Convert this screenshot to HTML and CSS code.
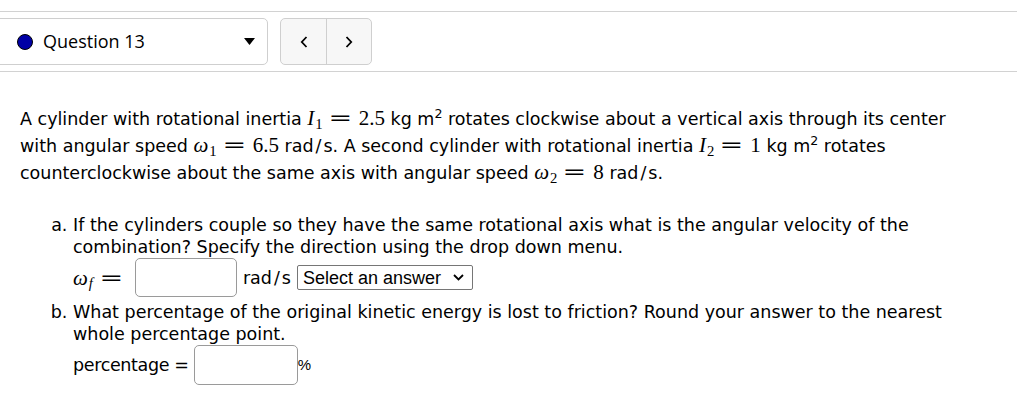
FILE: index.html
```html
<!DOCTYPE html>
<html lang="en">
<head>
<meta charset="utf-8">
<title>Question 13</title>
<link rel="stylesheet" href="styles.css">
</head>
<body>
<header class="qbar">
  <div class="qselect">
    <span class="dot"></span>
    <span class="qlabel">Question 13</span>
    <svg class="caret" width="11" height="7" viewBox="0 0 11 7"><path d="M0 0 H11 L5.5 7 Z" fill="#000"/></svg>
  </div>
  <div class="navgroup">
    <button class="navbtn" type="button" aria-label="Previous">
      <svg width="8" height="12" viewBox="0 0 8 12"><path d="M6.5 1 L1.8 6 L6.5 11" fill="none" stroke="#000" stroke-width="1.8"/></svg>
    </button>
    <button class="navbtn" type="button" aria-label="Next">
      <svg width="8" height="12" viewBox="0 0 8 12"><path d="M1.5 1 L6.2 6 L1.5 11" fill="none" stroke="#000" stroke-width="1.8"/></svg>
    </button>
  </div>
</header>
<main class="question">
  <p class="stem">A cylinder with rotational inertia <span class="m"><span class="mi">I</span><sub>1</sub><span class="mo">=</span>2.5</span> kg m<sup>2</sup> rotates clockwise about a vertical axis through its center with angular speed <span class="m"><span class="mi">ω</span><sub>1</sub><span class="mo">=</span>6.5</span> rad<span class="slash">/</span>s. A second cylinder with rotational inertia <span class="m"><span class="mi">I</span><sub>2</sub><span class="mo">=</span>1</span> kg m<sup>2</sup> rotates counterclockwise about the same axis with angular speed <span class="m"><span class="mi">ω</span><sub>2</sub><span class="mo">=</span>8</span> rad<span class="slash">/</span>s.</p>
  <ol class="parts">
    <li>
      <p class="prompt">If the cylinders couple so they have the same rotational axis what is the angular velocity of the combination? Specify the direction using the drop down menu.</p>
      <div class="answer">
        <span class="m"><span class="mi">ω</span><sub class="mi">f</sub><span class="mo">=</span></span>
        <input class="field field-a" type="text" aria-label="omega f">
        <span class="unit">rad<span class="slash">/</span>s</span>
        <label class="select">
          <select aria-label="direction">
            <option>Select an answer</option>
            <option>clockwise</option>
            <option>counterclockwise</option>
          </select>
          <svg class="chev" width="11" height="7" viewBox="0 0 11 7"><path d="M1 1 L5.5 5.5 L10 1" fill="none" stroke="#000" stroke-width="1.8"/></svg>
        </label>
      </div>
    </li>
    <li>
      <p class="prompt">What percentage of the original kinetic energy is lost to friction? Round your answer to the nearest whole percentage point.</p>
      <div class="answer">
        <span class="pct-label">percentage =</span>
        <input class="field field-b" type="text" aria-label="percentage">
        <span class="pct">%</span>
      </div>
    </li>
  </ol>
</main>
</body>
</html>
```
FILE: styles.css
```css
* { box-sizing: border-box; }

body {
  margin: 0;
  background: #fff;
  color: #000;
  font-family: "DejaVu Sans", sans-serif;
}

.qbar {
  margin-top: 11px;
  border-top: 1px solid #d2d2d2;
  border-bottom: 1px solid #d2d2d2;
  padding: 6px 0;
  display: flex;
}

.qselect {
  margin-left: -6px;
  width: 274px;
  height: 47px;
  border: 1px solid #cfcfcf;
  border-radius: 5px;
  display: flex;
  align-items: center;
  padding-left: 22px;
  padding-right: 12px;
}

.dot {
  width: 16px;
  height: 16px;
  border-radius: 50%;
  background: #0000a6;
  border: 1.5px solid #000;
  flex: none;
}

.qlabel {
  margin-left: 10px;
  font-family: "Open Sans", sans-serif;
  font-size: 18px;
  flex: 1;
  position: relative;
  top: -1px;
}

.caret { flex: none; }

.navgroup {
  margin-left: 12px;
  height: 47px;
  display: flex;
  border: 1px solid #cfcfcf;
  border-radius: 5px;
  background: #f7f7f7;
  overflow: hidden;
}

.navbtn {
  width: 45px;
  border: 0;
  padding: 0;
  background: transparent;
  display: flex;
  align-items: center;
  justify-content: center;
}

.navbtn + .navbtn {
  width: 45px;
  border-left: 1px solid #cfcfcf;
}

.question {
  padding: 33px 50px 0 20px;
  font-size: 17.5px;
}

.stem {
  margin: 0;
  line-height: 26px;
}

.m {
  font-family: "Liberation Serif", serif;
  font-size: 21px;
}

.mi { font-style: italic; }

.m > .mi { margin-right: 1px; }

.mo {
  display: inline-block;
  width: 19px;
  margin: 0 9px 0 8px;
  text-align: center;
  font-family: "DejaVu Serif", serif;
  font-style: normal;
  transform: scaleX(1.35);
}

sub {
  font-size: 70%;
  vertical-align: -0.25em;
  line-height: 0;
}

sup {
  font-size: 72%;
  vertical-align: 0.55em;
  line-height: 0;
}

.slash { margin: 0 2px; }

.parts {
  margin: 28px 0 0;
  padding-left: 53px;
  line-height: 22px;
  list-style: lower-alpha;
}

.parts li + li { margin-top: 4px; }

.prompt { margin: 0; }

.answer {
  display: flex;
  align-items: center;
}

.field {
  border: 1px solid #9a9a9a;
  border-radius: 5px;
  background: #fff;
  font: inherit;
  padding: 0 6px;
}

.field-a {
  width: 102px;
  height: 39px;
  margin-left: 5px;
}

.pct-label { letter-spacing: -0.35px; }

.field-b {
  width: 104px;
  height: 40px;
  margin-left: 5px;
}

.unit { margin-left: 6px; }

.select {
  position: relative;
  margin-left: 6px;
  width: 176px;
  height: 25px;
  border: 1px solid #767676;
  border-radius: 2px;
  display: flex;
  align-items: center;
}

.select select {
  appearance: none;
  -webkit-appearance: none;
  border: 0;
  background: transparent;
  width: 100%;
  height: 100%;
  padding: 0 0 0 5px;
  font-family: "Liberation Sans", Arial, sans-serif;
  font-size: 18px;
  color: #000;
}

.chev {
  position: absolute;
  right: 8px;
  top: 8px;
  pointer-events: none;
}

.pct {
  font-family: "Liberation Sans", Arial, sans-serif;
  font-size: 15px;
}
```
